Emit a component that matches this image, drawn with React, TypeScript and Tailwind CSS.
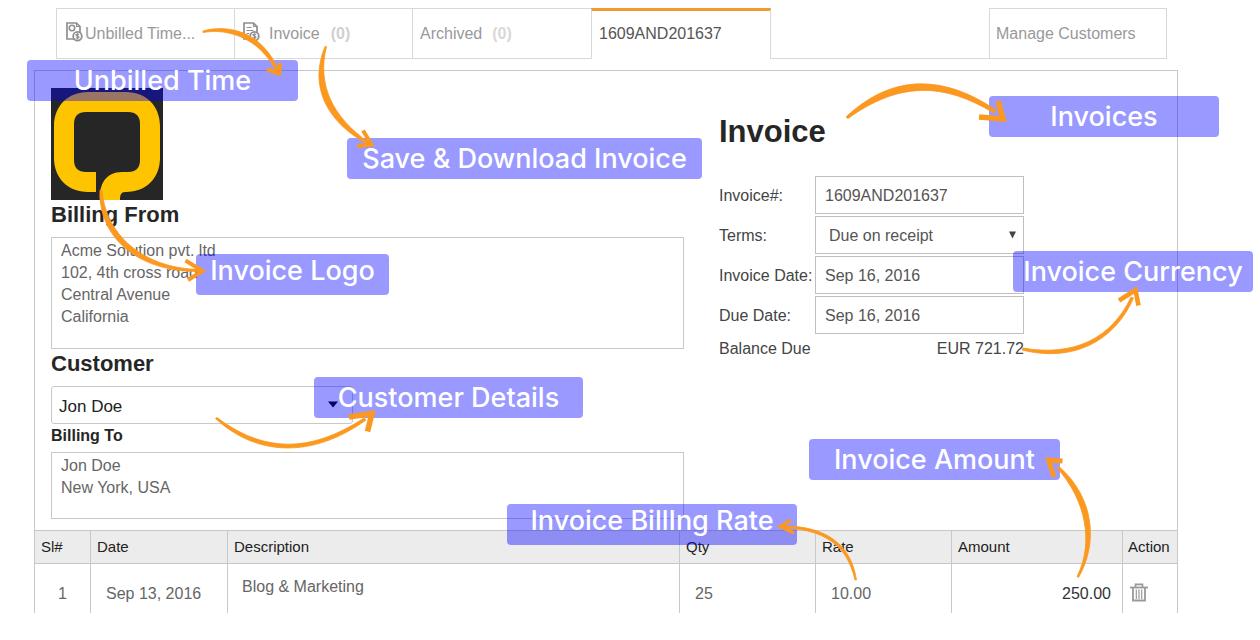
import React from "react";

type Callout = { text: string; place: string; raised?: boolean };

const callouts: Callout[] = [
  { text: "Unbilled Time", place: "left-[27px] top-[60px] w-[271px]" },
  { text: "Save & Download Invoice", place: "left-[347px] top-[138px] w-[355px]" },
  { text: "Invoices", place: "left-[989px] top-[96px] w-[230px]" },
  { text: "Invoice Logo", place: "left-[196px] top-[254px] w-[193px]", raised: true },
  { text: "Invoice Currency", place: "left-[1013px] top-[251px] w-[240px]" },
  { text: "Customer Details", place: "left-[314px] top-[377px] w-[269px]" },
  { text: "Invoice Amount", place: "left-[809px] top-[439px] w-[251px]" },
  { text: "Invoice BillIng Rate", place: "left-[507px] top-[504px] w-[290px]", raised: true },
];

type Arrow = { body: string; head: string; weight: number };

const arrows: Arrow[] = [
  {
    body: "M203 31 C228 24 262 31 279 71 L276.5 72 C260 38 228 28 203 32.5 Z",
    head: "M267 69.5 L279 73.5 L280 63",
    weight: 4.2,
  },
  {
    body: "M326.5 46.5 C317 84 332 117 369 142.500 L368 144.500 C325 121 309 85 325 46.500 Z",
    head: "M363 130.500 L371.500 144.500 L357.500 146",
    weight: 4,
  },
  {
    body: "M846 117 C893 73 944 75 996 110 L994 113 C944 83 900 81 848 118.500 Z",
    head: "M998 101 L1003 119 L979 117",
    weight: 5.6,
  },
  {
    body: "M102 190 C105 232 140 268 199 269.500 L199 271.500 C134 272 98 234 100 190 Z",
    head: "M185.500 260.500 L202.500 271 L188 280",
    weight: 4,
  },
  {
    body: "M217 417.500 C263 452 309 454 364 418 L366 420 C312 459 256 456 215.500 418.500 Z",
    head: "M349 417 L372 413.500 L367.500 431.500",
    weight: 5.600,
  },
  {
    body: "M1023 348 C1074 357 1112 338 1131 297 L1133.500 298 C1115 341 1073 363 1022 350 Z",
    head: "M1119 300.500 L1135.500 290 L1138.500 305.500",
    weight: 4.600,
  },
  {
    body: "M855 580 C847 544 823 529 782 528 L782 526 C824 525.500 851 543 856.500 580 Z",
    head: "M791 520 L780.500 526.500 L794 533",
    weight: 3.600,
  },
  {
    body: "M1077 576.500 C1094 543 1086 500 1057 468 L1059 466.500 C1095 498 1098 544 1078.500 577.500 Z",
    head: "M1062.500 461 L1048.500 460 L1054 477",
    weight: 4.800,
  },
];

function DollarBadge() {
  return (
    <>
      <circle cx="11.500" cy="14.200" r="4.300" fill="#fff" stroke="#8f8f8f" strokeWidth="1.800" />
      <path
        d="M13 12.600c-.800-.700-3-.700-3 .500 0 1.300 3 .800 3 2.100 0 1.200-2.300 1.200-3.200.400M11.500 11.300v5.900"
        stroke="#8f8f8f"
        strokeWidth="1.200"
        fill="none"
      />
    </>
  );
}

function UnbilledIcon() {
  return (
    <svg className="mb-1" width="17" height="20" viewBox="0 0 17 20" fill="none" aria-hidden="true">
      <path d="M1 1h9.500l3.500 3.500V17H1Z" stroke="#8f8f8f" strokeWidth="1.700" />
      <path d="M10.500 1v3.500H14" stroke="#8f8f8f" strokeWidth="1.200" />
      <circle cx="6" cy="6" r="2.700" stroke="#8f8f8f" strokeWidth="1.600" />
      <DollarBadge />
    </svg>
  );
}

function InvoiceIcon() {
  return (
    <svg className="mb-1" width="17" height="20" viewBox="0 0 17 20" fill="none" aria-hidden="true">
      <path d="M1 1h9.500l3.500 3.500V17H1Z" stroke="#8f8f8f" strokeWidth="1.700" />
      <path d="M10.500 1v3.500H14" stroke="#8f8f8f" strokeWidth="1.200" />
      <path d="M3.500 5.500h5M3.500 8.500h7M3.500 11.500h3" stroke="#8f8f8f" strokeWidth="1" />
      <DollarBadge />
    </svg>
  );
}

function TrashIcon() {
  return (
    <svg width="18" height="19" viewBox="0 0 18 19" fill="none" stroke="#999" aria-hidden="true">
      <path d="M0 4.500h18" strokeWidth="1.800" />
      <path d="M5.500 4V1.300h7V4" strokeWidth="1.700" />
      <path d="M3 5v12.500h12V5" strokeWidth="1.800" />
      <path d="M6.300 6.500v9.500M9 6.500v9.500M11.700 6.500v9.500" strokeWidth="1.200" />
    </svg>
  );
}

function Logo() {
  return (
    <svg className="block" width="112" height="112" viewBox="0 0 112 112" role="img" aria-label="Company logo">
      <rect width="112" height="112" fill="#262626" />
      <path
        fill="#ffc400"
        fillRule="evenodd"
        d="M37 4H75C95 4 109 18 109 38V70C109 90 95 104 75 104H74C70 104 69 107 69 112H49C48 96 55 84 71 84H77C85 84 89 80 89 72V36C89 28 85 24 77 24H35C27 24 23 28 23 36V72C23 80 27 84 35 84H45V104H37C17 104 3 90 3 70V38C3 18 17 4 37 4Z"
      />
    </svg>
  );
}

const tab = "flex h-[51px] shrink-0 items-center border-t border-b border-l border-[#d8d8d8] text-[#999]";
const field = "h-[38px] w-[209px] rounded-none border border-[#bfbfbf] bg-white pt-[1px] pl-[9px] text-[16px] text-[#555]";
const th = "h-[34px] border-r border-[#c8c8c8] pl-[6px] text-left text-[15px] font-normal";
const td = "border-r border-[#c8c8c8] pt-[18px] align-top";

export default function App() {
  return (
    <div className="relative w-full max-w-[1260px] overflow-hidden bg-white pt-2 pb-[27px] font-['Liberation_Sans',Arial,sans-serif] text-[16px] leading-6 text-[#333]">
      <nav className="mr-[93px] ml-14 flex">
        <button className={`${tab} w-[178px] gap-[2px] pl-[9px]`}>
          <UnbilledIcon />
          Unbilled Time...
        </button>
        <button className={`${tab} w-[178px] pl-2`}>
          <InvoiceIcon />
          <span className="ml-[9px]">Invoice</span>
          <b className="ml-[11px] text-[#d0d0d0]">(0)</b>
        </button>
        <button className={`${tab} w-[179px] pl-[7px]`}>
          Archived
          <b className="ml-[10px] text-[#d8d8d8]">(0)</b>
        </button>
        <button className="flex h-[51px] w-[180px] shrink-0 items-center border-t-3 border-r border-l border-t-[#f09a35] border-r-[#d8d8d8] border-l-[#d8d8d8] pb-[2px] pl-[7px] text-[#555]">
          1609AND201637
        </button>
        <div className="flex-1 border-b border-[#d8d8d8]" />
        <button className={`${tab} w-[178px] border-r pl-[6px]`}>Manage Customers</button>
      </nav>

      <main className="mt-[11px] mr-[82px] ml-[34px] border-x border-t border-[#c8c8c8]">
        <div className="flex gap-[35px] pb-[11px] pl-4">
          <section className="flex-1 pt-[17px]">
            <Logo />
            <h2 className="mb-[7px] text-[22px] leading-[30px] font-bold text-[#262626]">
              <label htmlFor="from">Billing From</label>
            </h2>
            <textarea
              id="from"
              className="block h-28 w-full resize-none overflow-hidden border border-[#c8c8c8] px-[9px] py-[2px] leading-[22px] text-[#666]"
              defaultValue={"Acme Solution pvt. ltd\n102, 4th cross road\nCentral Avenue\nCalifornia"}
            />
            <h2 className="mb-[7px] text-[22px] leading-[30px] font-bold text-[#262626]">
              <label htmlFor="customer">Customer</label>
            </h2>
            <div className="relative w-[302px]">
              <select
                id="customer"
                className="block h-[38px] w-full appearance-none rounded-[3px] border border-[#c8c8c8] bg-white pt-[4px] pl-[7px] text-[17px] text-[#222]"
              >
                <option>Jon Doe</option>
              </select>
              <svg className="absolute top-[15px] right-[15px]" width="10" height="7" viewBox="0 0 10 7" aria-hidden="true">
                <path d="M0 0.500h10L5 6.500Z" fill="#000" />
              </svg>
            </div>
            <h3 className="mb-1 text-[16px] leading-6 font-bold text-[#262626]">
              <label htmlFor="to">Billing To</label>
            </h3>
            <textarea
              id="to"
              className="block h-[67px] w-full resize-none overflow-hidden border border-[#c8c8c8] px-[9px] py-[2px] leading-[22px] text-[#666]"
              defaultValue={"Jon Doe\nNew York, USA"}
            />
          </section>

          <section className="w-[458px] shrink-0 pt-[41px]">
            <h1 className="mb-6 text-[31px] leading-10 font-bold text-[#262626]">Invoice</h1>
            <div className="grid w-[305px] grid-cols-[96px_209px] items-center gap-y-[2px] text-[#444] [&>label]:pt-[2px] [&>span]:pt-[1px]">
              <label htmlFor="number">Invoice#:</label>
              <input id="number" className={field} defaultValue="1609AND201637" />
              <label htmlFor="terms">Terms:</label>
              <div className="relative">
                <select id="terms" className={`${field} block appearance-none pl-[13px]`}>
                  <option>Due on receipt</option>
                </select>
                <svg className="absolute top-[15px] right-2" width="7" height="8" viewBox="0 0 7 8" aria-hidden="true">
                  <path d="M0 0.500h7L3.500 7.500Z" fill="#444" />
                </svg>
              </div>
              <label htmlFor="date" className="whitespace-nowrap">Invoice Date:</label>
              <input id="date" className={field} defaultValue="Sep 16, 2016" />
              <label htmlFor="due">Due Date:</label>
              <input id="due" className={field} defaultValue="Sep 16, 2016" />
              <span>Balance Due</span>
              <span className="text-right">EUR 721.72</span>
            </div>
          </section>
        </div>

        <table className="w-full table-fixed border-separate border-spacing-0">
          <colgroup>
            <col className="w-[56px]" />
            <col className="w-[137px]" />
            <col />
            <col className="w-[136px]" />
            <col className="w-[136px]" />
            <col className="w-[171px]" />
            <col className="w-[54px]" />
          </colgroup>
          <thead className="bg-[#ececec] text-[#222] [&_th]:border-y">
            <tr>
              <th className={th}>Sl#</th>
              <th className={th}>Date</th>
              <th className={th}>Description</th>
              <th className={th}>Qty</th>
              <th className={th}>Rate</th>
              <th className={th}>Amount</th>
              <th className="border-[#c8c8c8] pl-[5px] text-left text-[15px] font-normal">Action</th>
            </tr>
          </thead>
          <tbody className="text-[#666]">
            <tr className="h-[49px]">
              <td className={`${td} text-center`}>1</td>
              <td className={`${td} pl-[15px]`}>Sep 13, 2016</td>
              <td className="border-r border-[#c8c8c8] pt-[11px] pl-[14px] align-top">Blog &amp; Marketing</td>
              <td className={`${td} pl-[15px]`}>25</td>
              <td className={`${td} pl-[15px]`}>10.00</td>
              <td className={`${td} pr-[11px] text-right text-[#333]`}>250.00</td>
              <td className="pt-[19px] pl-[7px] align-top">
                <button className="block" aria-label="Delete row">
                  <TrashIcon />
                </button>
              </td>
            </tr>
          </tbody>
        </table>
      </main>

      {callouts.map((c) => (
        <div
          key={c.text}
          className={`absolute flex h-[41px] items-center justify-center rounded-[4px] bg-[#0000ff]/40 font-['Inter',sans-serif] text-[27px] leading-[33px] font-medium whitespace-nowrap text-white ${c.place} ${c.raised ? "pb-2" : ""}`}
        >
          {c.text}
        </div>
      ))}

      <svg
        className="pointer-events-none absolute top-0 left-0"
        width="1260"
        height="640"
        viewBox="0 0 1260 640"
        aria-hidden="true"
      >
        {arrows.map((a) => (
          <g key={a.head}>
            <path d={a.body} fill="#fb9820" stroke="#fb9820" strokeWidth="0.8" strokeLinejoin="round" />
            <path d={a.head} fill="none" stroke="#fb9820" strokeWidth={a.weight} />
          </g>
        ))}
      </svg>
    </div>
  );
}
